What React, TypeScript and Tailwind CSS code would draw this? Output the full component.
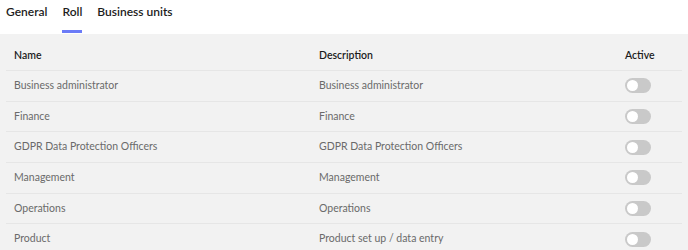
import React from 'react';

interface Role {
  name: string;
  description: string;
  active: boolean;
}

const roles: Role[] = [
  { name: 'Business administrator', description: 'Business administrator', active: false },
  { name: 'Finance', description: 'Finance', active: false },
  { name: 'GDPR Data Protection Officers', description: 'GDPR Data Protection Officers', active: false },
  { name: 'Management', description: 'Management', active: false },
  { name: 'Operations', description: 'Operations', active: false },
  { name: 'Product', description: 'Product set up / data entry', active: false },
];

const tabs = ['General', 'Roll', 'Business units'];

const Toggle: React.FC<{ on: boolean }> = ({ on }) => (
  <div className={`w-[26px] h-[15px] rounded-full p-[2px] flex ${on ? 'bg-[#6b7bf7] justify-end' : 'bg-[#c9c9c9]'}`}>
    <div className="w-[11px] h-[11px] rounded-full bg-white" />
  </div>
);

const App: React.FC = () => {
  return (
    <div className="w-[688px] h-[250px] bg-white overflow-hidden font-['Lato',sans-serif]">
      {/* Pestañas */}
      <div className="flex h-[34px] pl-[6px] gap-[15px]">
        {tabs.map((tab) => (
          <div key={tab} className="flex flex-col justify-between">
            <span className="text-[12px] font-semibold text-[#1c1c1c] pt-[3px]">{tab}</span>
            <div className={`h-[3px] mb-[1px] ${tab === 'Roll' ? 'bg-[#6b7bf7]' : ''}`} />
          </div>
        ))}
      </div>

      {/* Tabla de roles */}
      <div className="bg-[#f2f2f2] px-[6px]">
        <div className="grid grid-cols-[305px_306px_1fr] h-[37px] pt-[7px] items-center px-[8px] border-b border-[#e6e6e6] text-[10.5px] font-semibold text-[#1c1c1c]">
          <span>Name</span>
          <span>Description</span>
          <span>Active</span>
        </div>
        {roles.map((role) => (
          <div
            key={role.name}
            className="grid grid-cols-[305px_306px_1fr] h-[30.7px] items-center px-[8px] border-b border-[#e6e6e6] text-[10.5px] text-[#6a6a6a]"
          >
            <span>{role.name}</span>
            <span>{role.description}</span>
            <Toggle on={role.active} />
          </div>
        ))}
      </div>
    </div>
  );
};

export default App;
